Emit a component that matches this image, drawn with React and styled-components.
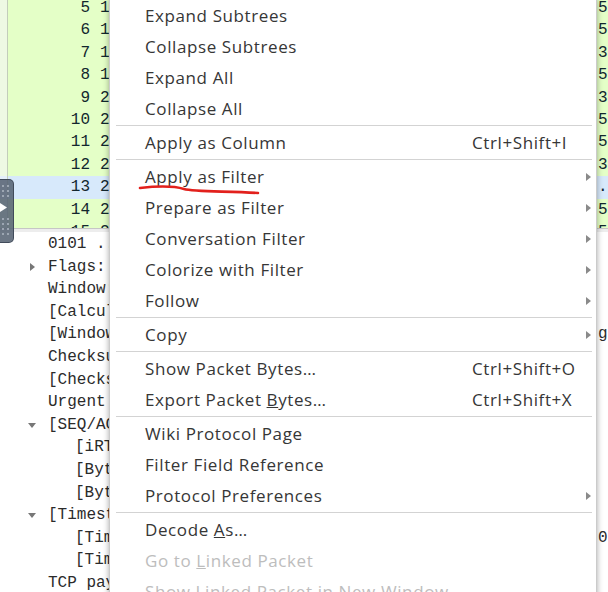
import React from 'react'
import styled, { createGlobalStyle } from 'styled-components'

const GlobalStyle = createGlobalStyle`
  html, body {
    margin: 0;
    padding: 0;
    width: 608px;
    height: 592px;
    overflow: hidden;
    background: #ffffff;
  }
`

const Screen = styled.div`
  position: relative;
  width: 608px;
  height: 592px;
  overflow: hidden;
  font-family: "Liberation Mono", monospace;
  font-size: 16px;
`

const PacketList = styled.div`
  height: 228px;
  overflow: hidden;
  background: #e4ffc7;
  border-bottom: 1px solid #c6c6c6;
`

const PacketRows = styled.div`
  margin-top: -3px;
`

const PacketRow = styled.div`
  display: grid;
  grid-template-columns: 8px 82px 508px 1fr;
  height: 22.4px;
  line-height: 22.4px;
  color: #12272e;
  background: ${({ $selected }) => ($selected ? '#d7e9fb' : '#e4ffc7')};
  white-space: pre;
`

const Marker = styled.div`
  border-right: 1px solid #c3cdbb;
  background: ${({ $selected }) => ($selected ? '#e4effb' : '#eef9e4')};
`

const No = styled.div`
  text-align: right;
`

const Cell = styled.div`
  overflow: hidden;
  padding-left: ${({ $pad }) => $pad || 0}px;
`

const Splitter = styled.div`
  height: 3px;
  background: #ededed;
`

const Details = styled.div`
  padding-top: 1px;
  color: #2b2b2b;
`

const DetailRow = styled.div`
  display: grid;
  grid-template-columns: 598px 1fr;
  height: 22.6px;
  line-height: 22.6px;
  white-space: pre;
`

const DetailText = styled.div`
  position: relative;
  padding-left: ${({ $level }) => 48 + $level * 27}px;
  overflow: hidden;
`

const Expander = styled.span`
  position: absolute;
  top: 50%;
  left: ${({ $level }) => 28 + $level * 27}px;
  width: 0;
  height: 0;
  ${({ $open }) =>
    $open
      ? `
    margin-top: -2px;
    border-left: 4px solid transparent;
    border-right: 4px solid transparent;
    border-top: 5px solid #777;
  `
      : `
    margin-top: -4px;
    left: 30px;
    border-top: 4px solid transparent;
    border-bottom: 4px solid transparent;
    border-left: 5px solid #777;
  `}
`

const Handle = styled.div`
  position: absolute;
  left: 0;
  top: 179px;
  width: 14px;
  height: 64px;
  box-sizing: border-box;
  background: rgba(88, 100, 116, 0.88);
  border: 1px solid rgba(62, 72, 86, 0.9);
  border-left: none;
  border-radius: 0 5px 5px 0;
  display: flex;
  flex-direction: column;
  align-items: flex-start;
  padding: 5px 0 0 2px;
  gap: 3px;
`

const DotRow = styled.div`
  display: flex;
  gap: 3px;
  & > i {
    width: 2px;
    height: 2px;
    background: #9ca6b2;
  }
`

const HandleArrow = styled.svg`
  margin: 3px 0 3px -2px;
`

const Menu = styled.div`
  position: absolute;
  left: 109px;
  top: -1px;
  width: 488px;
  box-sizing: border-box;
  background: #ffffff;
  border: 1px solid #cbcbcb;
  box-shadow: 0 0 6px rgba(0, 0, 0, 0.35);
  font-family: "Open Sans", "Noto Sans", sans-serif;
  font-size: 17px;
  letter-spacing: 0.6px;
  color: #363636;
`

const Item = styled.div`
  display: grid;
  grid-template-columns: 327px 1fr 20px;
  align-items: center;
  height: 31px;
  padding-left: 35px;
  white-space: nowrap;
  color: ${({ $disabled }) => ($disabled ? '#bdbdbd' : '#363636')};
`

const Shortcut = styled.span``

const SubArrow = styled.span`
  justify-self: start;
  margin-left: 10px;
  width: 0;
  height: 0;
  border-top: 4px solid transparent;
  border-bottom: 4px solid transparent;
  border-left: 5px solid #8a8a8a;
`

const Sep = styled.div`
  height: 3px;
  display: flex;
  align-items: center;
  padding: 0 4px 0 6px;
  &::after {
    content: '';
    flex: 1;
    height: 1px;
    background: #d3d3d3;
  }
`

const Scribble = styled.svg`
  position: absolute;
  left: 0;
  top: 0;
  pointer-events: none;
`

const packets = [
  ['5', '1.204811', '56'],
  ['6', '1.205002', '56'],
  ['7', '1.320117', '38'],
  ['8', '1.320401', '56'],
  ['9', '2.001236', '38'],
  ['10', '2.004581', '56'],
  ['11', '2.118904', '56'],
  ['12', '2.119330', '38'],
  ['13', '2.350612', '.:'],
  ['14', '2.351007', '56'],
  ['15', '2.402219', '56'],
]

const details = [
  { level: 0, text: '0101 .... = Header Length: 20 bytes (5)' },
  { level: 0, text: 'Flags: 0x018 (PSH, ACK)', exp: 'closed' },
  { level: 0, text: 'Window: 501' },
  { level: 0, text: '[Calculated window size: 64128]' },
  { level: 0, text: '[Window size scaling factor: 128]', tail: 'g' },
  { level: 0, text: 'Checksum: 0x1c2e [unverified]' },
  { level: 0, text: '[Checksum Status: Unverified]' },
  { level: 0, text: 'Urgent Pointer: 0' },
  { level: 0, text: '[SEQ/ACK analysis]', exp: 'open' },
  { level: 1, text: '[iRTT: 0.000213000 seconds]' },
  { level: 1, text: '[Bytes in flight: 56]' },
  { level: 1, text: '[Bytes sent since last PSH flag: 56]' },
  { level: 0, text: '[Timestamps]', exp: 'open' },
  { level: 1, text: '[Time since first frame in this TCP stream: 2.350612]', tail: '01' },
  { level: 1, text: '[Time since previous frame in this TCP stream: 0.23]', tail: ' 6' },
  { level: 0, text: 'TCP payload (56 bytes)' },
]

const menu = [
  { label: 'Expand Subtrees' },
  { label: 'Collapse Subtrees' },
  { label: 'Expand All' },
  { label: 'Collapse All' },
  'sep',
  { label: 'Apply as Column', shortcut: 'Ctrl+Shift+I' },
  'sep',
  { label: 'Apply as Filter', sub: true },
  { label: 'Prepare as Filter', sub: true },
  { label: 'Conversation Filter', sub: true },
  { label: 'Colorize with Filter', sub: true },
  { label: 'Follow', sub: true },
  'sep',
  { label: 'Copy', sub: true },
  'sep',
  { label: 'Show Packet Bytes…', shortcut: 'Ctrl+Shift+O' },
  { label: <>Export Packet <u>B</u>ytes…</>, shortcut: 'Ctrl+Shift+X' },
  'sep',
  { label: 'Wiki Protocol Page' },
  { label: 'Filter Field Reference' },
  { label: 'Protocol Preferences', sub: true },
  'sep',
  { label: <>Decode <u>A</u>s…</> },
  { label: <>Go to <u>L</u>inked Packet</>, disabled: true },
  { label: <>Show <u>L</u>inked Packet in New Window</>, disabled: true },
]

const Dots = ({ rows }) => (
  <>
    {Array.from({ length: rows }).map((_, i) => (
      <DotRow key={i}>
        <i />
        <i />
      </DotRow>
    ))}
  </>
)

export default function App() {
  return (
    <Screen>
      <GlobalStyle />
      <PacketList>
        <PacketRows>
          {packets.map(([no, time, tail]) => {
            const selected = no === '13'
            return (
              <PacketRow key={no} $selected={selected}>
                <Marker $selected={selected} />
                <No>{no}</No>
                <Cell $pad={10}>{time}  192.168.1.20  192.168.1.1  TCP</Cell>
                <Cell>{tail}</Cell>
              </PacketRow>
            )
          })}
        </PacketRows>
      </PacketList>
      <Splitter />
      <Details>
        {details.map((d, i) => (
          <DetailRow key={i}>
            <DetailText $level={d.level}>
              {d.exp && <Expander $level={d.level} $open={d.exp === 'open'} />}
              {d.text}
            </DetailText>
            <Cell>{d.tail}</Cell>
          </DetailRow>
        ))}
      </Details>

      <Handle>
        <Dots rows={3} />
        <HandleArrow width="8" height="9" viewBox="0 0 8 9">
          <path d="M0 0 L7 4.5 L0 9 Z" fill="#ffffff" />
        </HandleArrow>
        <Dots rows={4} />
      </Handle>

      <Menu>
        {menu.map((m, i) =>
          m === 'sep' ? (
            <Sep key={i} />
          ) : (
            <Item key={i} $disabled={m.disabled}>
              <span>{m.label}</span>
              <Shortcut>{m.shortcut}</Shortcut>
              {m.sub ? <SubArrow /> : <span />}
            </Item>
          )
        )}
      </Menu>

      <Scribble width="608" height="592" viewBox="0 0 608 592">
        <path
          d="M140 188 C 158 186, 174 186, 184 189 S 228 191, 258 193"
          fill="none"
          stroke="#e2201c"
          strokeWidth="2.6"
          strokeLinecap="round"
        />
      </Scribble>
    </Screen>
  )
}
